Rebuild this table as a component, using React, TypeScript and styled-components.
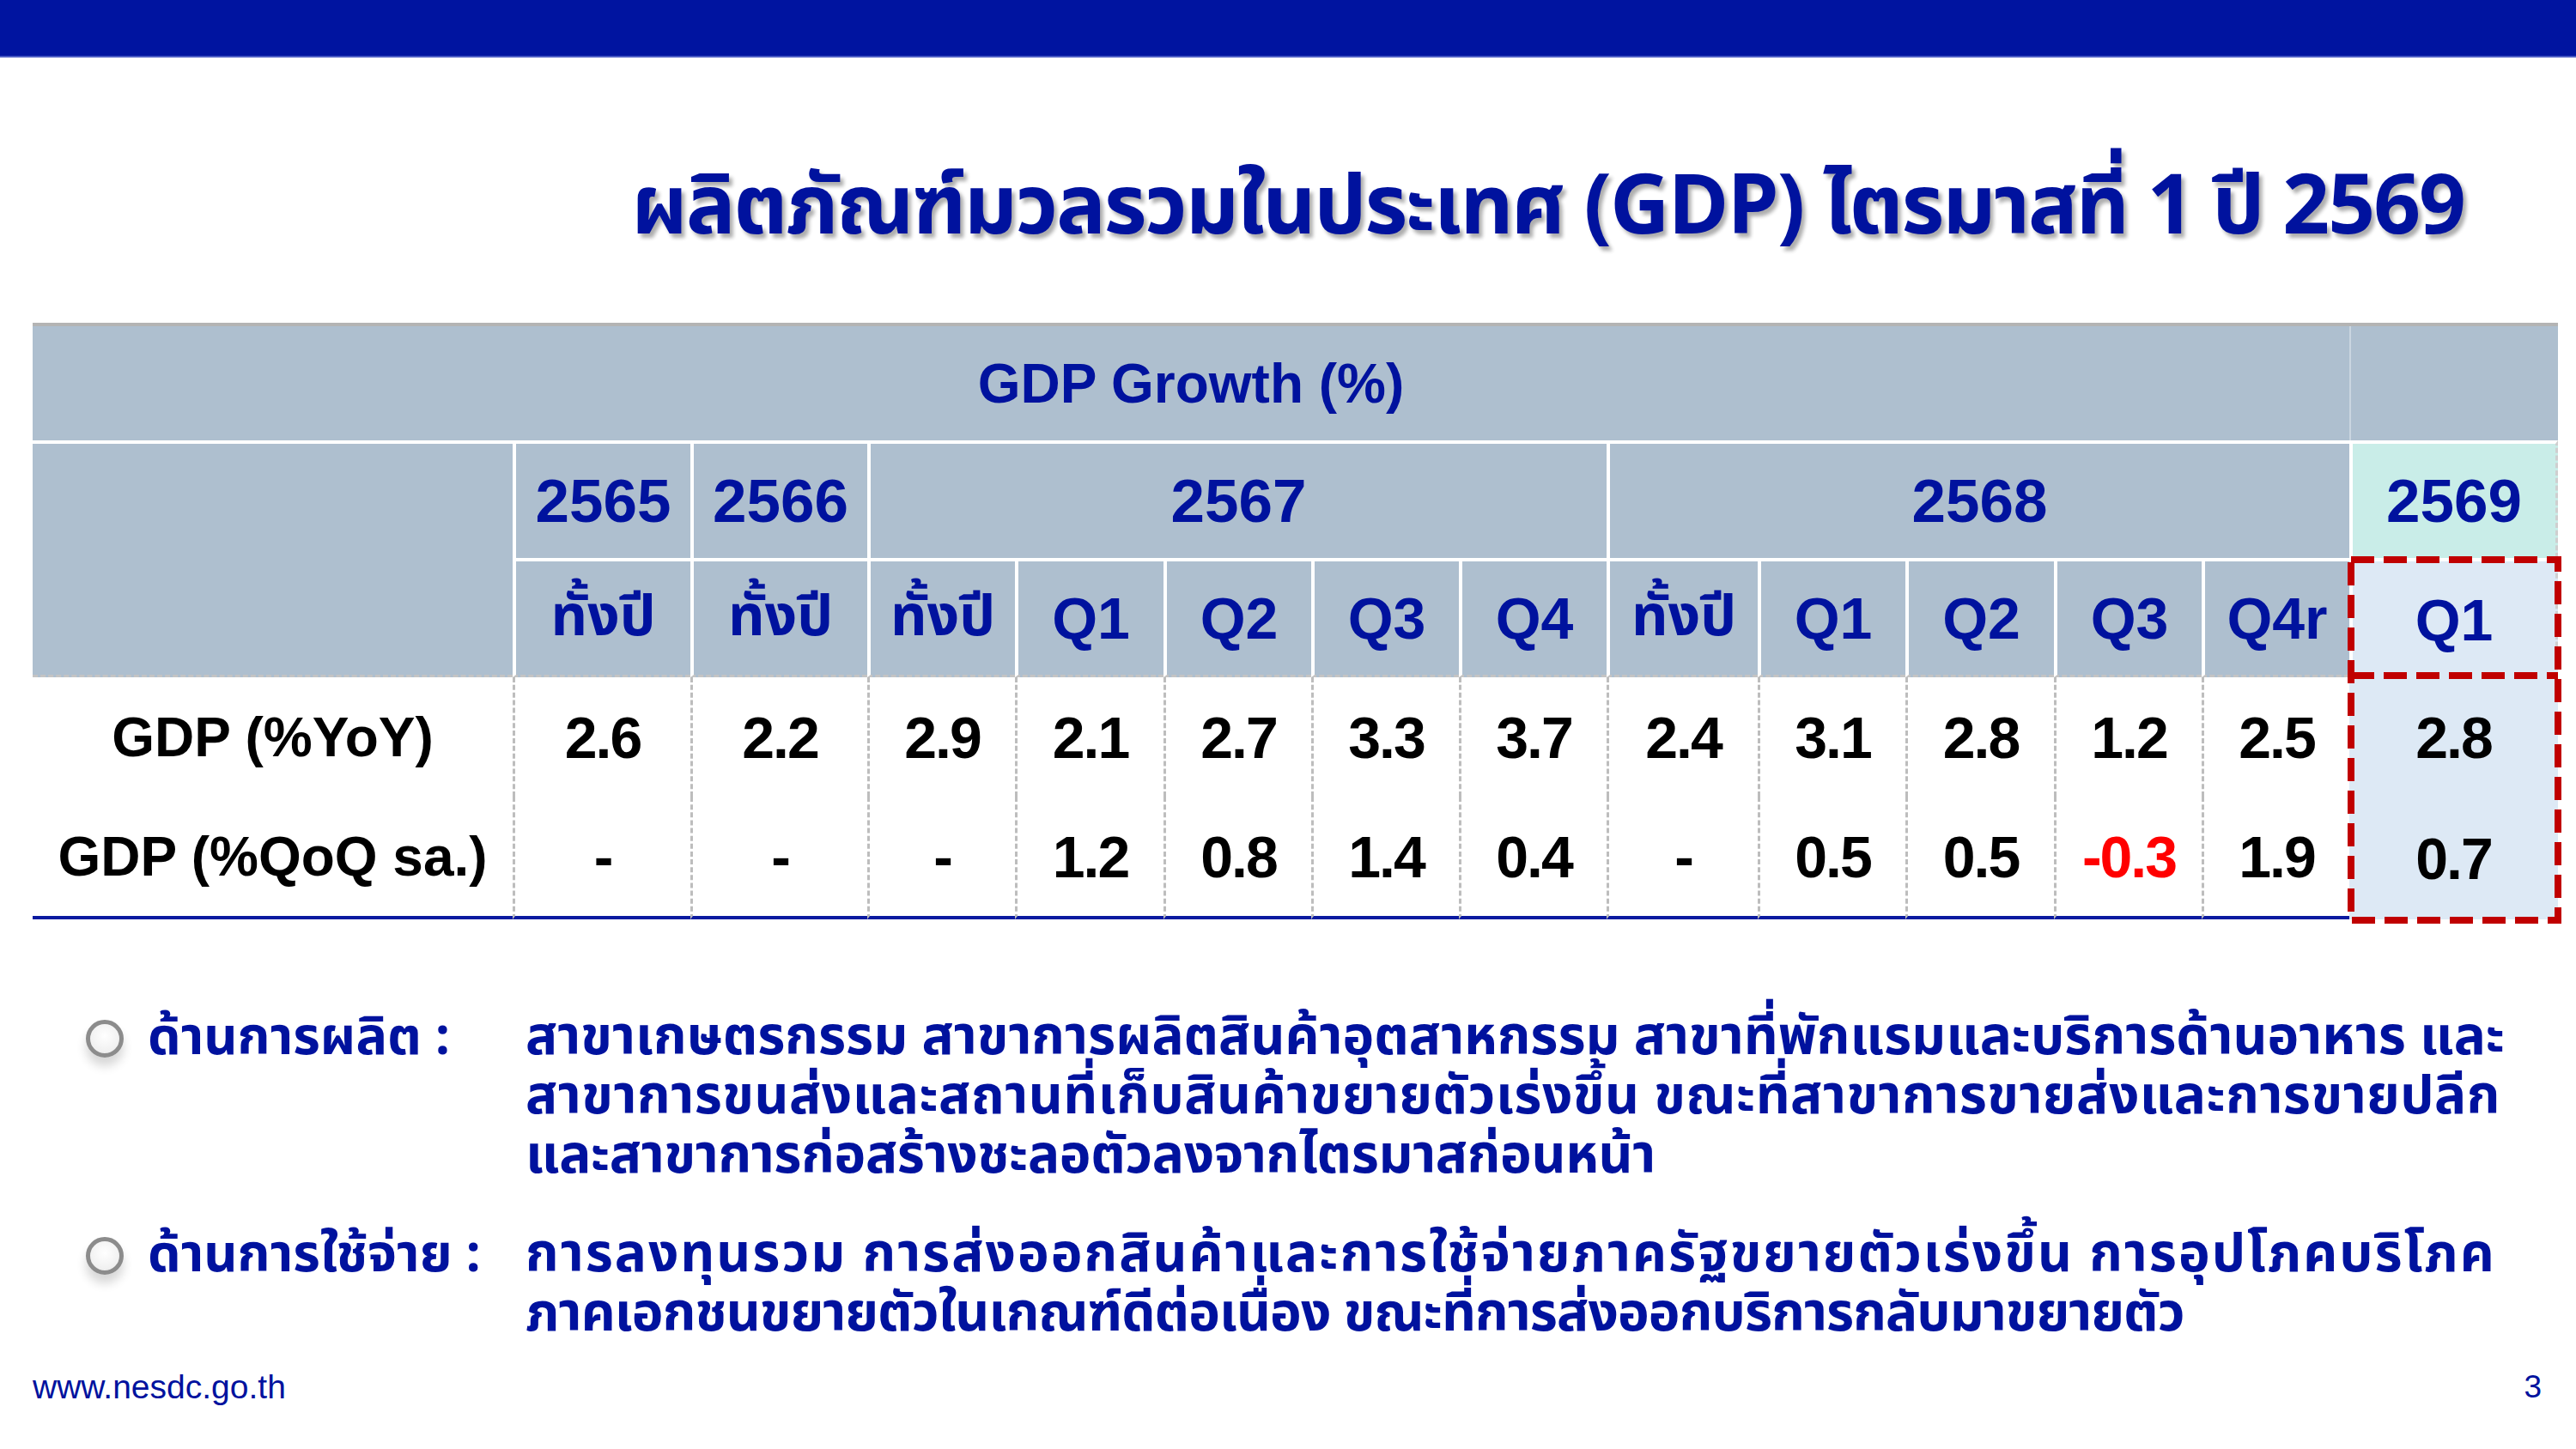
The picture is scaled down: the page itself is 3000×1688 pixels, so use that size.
import React from "react";
import styled, { createGlobalStyle } from "styled-components";

const THAI = `"Noto Sans Thai", "Noto Sans Thai UI", "Noto Sans", "Liberation Sans", sans-serif`;
const LATIN = `"Liberation Sans", Arial, sans-serif`;
const BLUE = "#00129e";

const Global = createGlobalStyle`
  html, body { margin: 0; padding: 0; background: #ffffff; }
  body { font-family: ${LATIN}; }
`;

const Page = styled.div`
  width: 3000px;
  height: 1688px;
  display: flex;
  flex-direction: column;
  background: #ffffff;
  overflow: hidden;
`;

const TopBar = styled.div`
  height: 65px;
  background: #0014a0;
  border-bottom: 2px solid #4a5cc4;
  flex: none;
`;

const Title = styled.h1`
  margin: 0;
  height: 309px;
  box-sizing: border-box;
  padding: 128px 130px 0 0;
  text-align: right;
  font-family: ${THAI};
  font-weight: 700;
  font-size: 96px;
  letter-spacing: -2px;
  line-height: 1;
  color: ${BLUE};
  text-shadow: 4px 5px 4px rgba(0, 0, 0, 0.32);
  white-space: nowrap;
`;

const Table = styled.div`
  margin-left: 38px;
  width: 2941px;
  display: grid;
  grid-template-columns: 559px 207px 206px 172px 173px 172px 172px 172px 176px 172px 173px 172px 172px 243px;
  grid-template-rows: 133px 137px 139px 139px 143px;
  border-top: 4px solid #b4b4b4;
  flex: none;
`;

const Head = styled.div<{ $span?: number; $rows?: number; $top?: boolean; $left?: boolean; $dash?: boolean; $size?: number }>`
  grid-column: span ${(p) => p.$span ?? 1};
  grid-row: span ${(p) => p.$rows ?? 1};
  background: #aebfcf;
  box-sizing: border-box;
  display: flex;
  align-items: center;
  justify-content: center;
  color: ${BLUE};
  font-family: ${LATIN};
  font-weight: 700;
  font-size: ${(p) => p.$size ?? 68}px;
  white-space: nowrap;
  border-top: ${(p) => (p.$top ? "4px solid #ffffff" : "none")};
  border-left: ${(p) => (p.$left ? "4px solid #ffffff" : "none")};
  border-bottom: ${(p) => (p.$dash ? "3px dashed #c4c4c4" : "none")};
`;

const ThaiHead = styled.span`
  font-family: ${THAI};
  font-weight: 700;
  font-size: 66px;
`;

const LastHead = styled.div<{ $row: number; $bg: string; $top?: boolean; $size?: number }>`
  grid-column: 14;
  grid-row: ${(p) => p.$row};
  background: ${(p) => p.$bg};
  box-sizing: border-box;
  display: flex;
  align-items: center;
  justify-content: center;
  color: ${BLUE};
  font-weight: 700;
  font-size: ${(p) => p.$size ?? 68}px;
  border-top: ${(p) => (p.$top ? "4px solid #ffffff" : "none")};
  border-left: ${(p) => (p.$top ? "4px solid #ffffff" : "2px solid rgba(255,255,255,0.35)")};
  border-right: ${(p) => (p.$top ? "3px dashed #cfcfcf" : "none")};
`;

const Label = styled.div<{ $last?: boolean }>`
  box-sizing: border-box;
  display: flex;
  align-items: center;
  justify-content: center;
  font-weight: 700;
  font-size: 64px;
  color: #000000;
  white-space: nowrap;
  border-bottom: ${(p) => (p.$last ? "4px solid #0a1aa0" : "none")};
`;

const Value = styled.div<{ $last?: boolean; $neg?: boolean }>`
  box-sizing: border-box;
  display: flex;
  align-items: center;
  justify-content: center;
  font-weight: 700;
  font-size: 68px;
  letter-spacing: -2px;
  color: ${(p) => (p.$neg ? "#ff0000" : "#000000")};
  border-left: 3px dashed #bdbdbd;
  border-bottom: ${(p) => (p.$last ? "4px solid #0a1aa0" : "none")};
`;

const LastValue = styled.div<{ $row: number }>`
  grid-column: 14;
  grid-row: ${(p) => p.$row};
  background: #dde9f5;
  display: flex;
  align-items: center;
  justify-content: center;
  font-weight: 700;
  font-size: 68px;
  letter-spacing: -2px;
  color: #000000;
`;

const Highlight = styled.div`
  grid-column: 14;
  grid-row: 3 / 6;
  margin: -2px -4px -5px -2px;
  z-index: 2;
  pointer-events: none;
  svg { display: block; width: 100%; height: 100%; }
`;

const Notes = styled.div`
  display: flex;
  flex-direction: column;
  gap: 46px;
  padding: 104px 0 0 100px;
  flex: none;
`;

const Note = styled.div`
  display: grid;
  grid-template-columns: 44px 412px 1fr;
  column-gap: 28px;
  align-items: start;
`;

const Bullet = styled.div`
  width: 44px;
  height: 44px;
  margin-top: 13px;
  box-sizing: border-box;
  border-radius: 50%;
  border: 5px solid #8c8c8c;
  background: radial-gradient(circle at 50% 40%, #ffffff 0%, #f0f0f0 70%, #d9d9d9 100%);
  box-shadow: 0 10px 12px rgba(0, 0, 0, 0.16);
`;

const NoteLabel = styled.div`
  font-family: ${THAI};
  font-weight: 700;
  font-size: 61px;
  line-height: 69px;
  color: ${BLUE};
  white-space: nowrap;
`;

const NoteBody = styled.div`
  display: flex;
  flex-direction: column;
  font-family: ${THAI};
  font-weight: 700;
  font-size: 62px;
  line-height: 69px;
  color: ${BLUE};
`;

const Line = styled.span<{ $track: number }>`
  white-space: nowrap;
  letter-spacing: ${(p) => p.$track}px;
`;

const Footer = styled.div`
  margin-top: auto;
  display: flex;
  justify-content: space-between;
  align-items: center;
  padding: 0 40px 50px 38px;
  color: ${BLUE};
  font-family: ${LATIN};
  font-size: 39px;
`;

const Page3 = styled.span`
  font-size: 37px;
`;

const years: Array<{ label: string; span: number }> = [
  { label: "2565", span: 1 },
  { label: "2566", span: 1 },
  { label: "2567", span: 5 },
  { label: "2568", span: 5 },
];

const periods = ["ทั้งปี", "ทั้งปี", "ทั้งปี", "Q1", "Q2", "Q3", "Q4", "ทั้งปี", "Q1", "Q2", "Q3", "Q4r"];

const yoy = ["2.6", "2.2", "2.9", "2.1", "2.7", "3.3", "3.7", "2.4", "3.1", "2.8", "1.2", "2.5"];
const qoq = ["-", "-", "-", "1.2", "0.8", "1.4", "0.4", "-", "0.5", "0.5", "-0.3", "1.9"];

const notes: Array<{ label: string; lines: Array<{ text: string; track: number }> }> = [
  {
    label: "ด้านการผลิต :",
    lines: [
      { text: "สาขาเกษตรกรรม สาขาการผลิตสินค้าอุตสาหกรรม สาขาที่พักแรมและบริการด้านอาหาร และ", track: 0 },
      { text: "สาขาการขนส่งและสถานที่เก็บสินค้าขยายตัวเร่งขึ้น ขณะที่สาขาการขายส่งและการขายปลีก", track: 0.5 },
      { text: "และสาขาการก่อสร้างชะลอตัวลงจากไตรมาสก่อนหน้า", track: -0.35 },
    ],
  },
  {
    label: "ด้านการใช้จ่าย :",
    lines: [
      { text: "การลงทุนรวม การส่งออกสินค้าและการใช้จ่ายภาครัฐขยายตัวเร่งขึ้น การอุปโภคบริโภค", track: 2 },
      { text: "ภาคเอกชนขยายตัวในเกณฑ์ดีต่อเนื่อง ขณะที่การส่งออกบริการกลับมาขยายตัว", track: -0.9 },
    ],
  },
];

export default function App() {
  return (
    <Page>
      <Global />
      <TopBar />
      <Title>ผลิตภัณฑ์มวลรวมในประเทศ (GDP) ไตรมาสที่ 1 ปี 2569</Title>
      <Table>
        <Head $span={13} $size={64}>GDP Growth (%)</Head>
        <LastHead $row={1} $bg="#aebfcf" />
        <Head $rows={2} $top $dash />
        {years.map((y) => (
          <Head key={y.label} $span={y.span} $top $left $size={71}>
            {y.label}
          </Head>
        ))}
        <LastHead $row={2} $bg="#c9ede8" $top $size={71}>
          2569
        </LastHead>
        {periods.map((p, i) => (
          <Head key={i} $top $left $dash>
            {p === "ทั้งปี" ? <ThaiHead>{p}</ThaiHead> : p}
          </Head>
        ))}
        <LastHead $row={3} $bg="#dde9f5" $top>
          Q1
        </LastHead>
        <Label>GDP (%YoY)</Label>
        {yoy.map((v, i) => (
          <Value key={i}>{v}</Value>
        ))}
        <LastValue $row={4}>2.8</LastValue>
        <Label $last>GDP (%QoQ sa.)</Label>
        {qoq.map((v, i) => (
          <Value key={i} $last $neg={v.startsWith("-0")}>
            {v}
          </Value>
        ))}
        <LastValue $row={5}>0.7</LastValue>
        <Highlight>
          <svg viewBox="0 0 249 428" preserveAspectRatio="none">
            <rect x="4" y="4" width="241" height="420" fill="none" stroke="#c00000" strokeWidth="8" strokeDasharray="27 11" />
            <line x1="4" y1="139" x2="245" y2="139" stroke="#c00000" strokeWidth="8" strokeDasharray="27 11" />
          </svg>
        </Highlight>
      </Table>
      <Notes>
        {notes.map((n) => (
          <Note key={n.label}>
            <Bullet />
            <NoteLabel>{n.label}</NoteLabel>
            <NoteBody>
              {n.lines.map((l) => (
                <Line key={l.text} $track={l.track}>
                  {l.text}
                </Line>
              ))}
            </NoteBody>
          </Note>
        ))}
      </Notes>
      <Footer>
        <span>www.nesdc.go.th</span>
        <Page3>3</Page3>
      </Footer>
    </Page>
  );
}
